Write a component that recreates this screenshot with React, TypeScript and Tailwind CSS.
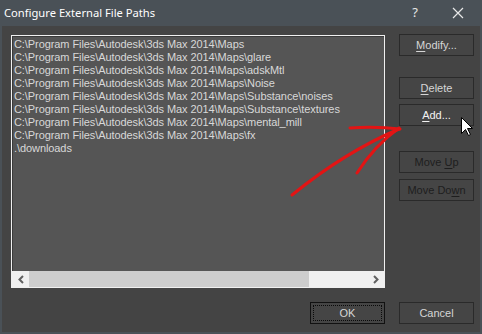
import React from "react";

const paths = [
  "C:\\Program Files\\Autodesk\\3ds Max 2014\\Maps",
  "C:\\Program Files\\Autodesk\\3ds Max 2014\\Maps\\glare",
  "C:\\Program Files\\Autodesk\\3ds Max 2014\\Maps\\adskMtl",
  "C:\\Program Files\\Autodesk\\3ds Max 2014\\Maps\\Noise",
  "C:\\Program Files\\Autodesk\\3ds Max 2014\\Maps\\Substance\\noises",
  "C:\\Program Files\\Autodesk\\3ds Max 2014\\Maps\\Substance\\textures",
  "C:\\Program Files\\Autodesk\\3ds Max 2014\\Maps\\mental_mill",
  "C:\\Program Files\\Autodesk\\3ds Max 2014\\Maps\\fx",
  ".\\downloads",
];

function Btn({
  pre,
  u,
  post,
  className = "",
  text = "text-[#d6d6d6]",
}: {
  pre: string;
  u: string;
  post: string;
  className?: string;
  text?: string;
}) {
  return (
    <div
      className={`w-[75px] h-[22px] border border-[#2a2a2a] bg-[#454545] flex items-center justify-center text-[11px] leading-none ${text} ${className}`}
    >
      <span>
        {pre}
        <span className="underline underline-offset-2">{u}</span>
        {post}
      </span>
    </div>
  );
}

export default function App() {
  return (
    <div
      className="relative w-[482px] h-[334px] bg-[#4a5157] flex flex-col overflow-hidden"
      style={{ fontFamily: '"Liberation Sans", Arial, sans-serif' }}
    >
      {/* Title bar */}
      <div className="h-[26px] flex items-center pl-[4px] pr-[14px] text-white">
        <span
          className="text-[11.2px]"
          style={{ fontFamily: '"Segoe UI", "Noto Sans", sans-serif' }}
        >
          Configure External File Paths
        </span>
        <div className="flex-1" />
        <span
          className="text-[13px] text-[#e8e8e8] mr-[34px]"
          style={{ fontFamily: '"Segoe UI", "Noto Sans", sans-serif' }}
        >
          ?
        </span>
        <svg width="12" height="12" viewBox="0 0 12 12" className="mr-[4px]">
          <path d="M1 1 L11 11 M11 1 L1 11" stroke="#e8e8e8" strokeWidth="1.2" />
        </svg>
      </div>

      {/* Body */}
      <div className="mx-[2px] mb-[2px] flex-1 bg-[#444444] flex flex-col pl-[9px] pr-[6px] pt-[8px]">
        <div className="flex">
          {/* List box */}
          <div className="mt-[1px] w-[374px] h-[253px] border border-[#f0f0f0] flex flex-col">
            <div className="flex-1 bg-[#555555] border-t border-l border-[#3a3a3a] pl-[1px] pt-[1px] text-[11px] leading-[13px] tracking-[-0.08px] text-[#d8d8d8] whitespace-pre overflow-hidden">
              {paths.map((p) => (
                <div key={p} className="h-[13px]">
                  {p}
                </div>
              ))}
            </div>
            <div className="h-[16px] bg-[#f0f0f0] flex items-stretch">
              <div className="w-[17px] flex items-center justify-center">
                <svg width="6" height="9" viewBox="0 0 6 9">
                  <path d="M5 1 L1.5 4.5 L5 8" stroke="#606060" strokeWidth="2" fill="none" />
                </svg>
              </div>
              <div className="w-[280px] bg-[#cdcdcd]" />
              <div className="flex-1" />
              <div className="w-[17px] flex items-center justify-center">
                <svg width="6" height="9" viewBox="0 0 6 9">
                  <path d="M1 1 L4.5 4.5 L1 8" stroke="#606060" strokeWidth="2" fill="none" />
                </svg>
              </div>
            </div>
          </div>

          {/* Right buttons */}
          <div className="ml-[14px] flex flex-col">
            <Btn pre="" u="M" post="odify..." />
            <Btn pre="" u="D" post="elete" className="mt-[21px]" />
            <Btn pre="" u="A" post="dd..." className="mt-[5px]" text="text-[#f2f2f2]" />
            <Btn pre="Move " u="U" post="p" className="mt-[25px]" text="text-[#1e1e1e]" />
            <Btn pre="Move Do" u="w" post="n" className="mt-[6px]" text="text-[#1e1e1e]" />
          </div>
        </div>

        {/* Bottom buttons */}
        <div className="mt-[14px] flex justify-end gap-[14px]">
          <div className="w-[75px] h-[22px] border border-[#111111] bg-[#454545] p-[2px]">
            <div className="w-full h-full border border-dotted border-[#0a0a0a] flex items-center justify-center text-[11px] text-[#d6d6d6]">
              OK
            </div>
          </div>
          <div className="w-[75px] h-[22px] border border-[#2a2a2a] bg-[#454545] flex items-center justify-center text-[11px] text-[#d6d6d6]">
            Cancel
          </div>
        </div>
      </div>

      {/* Red hand-drawn arrow overlay */}
      <svg
        className="absolute left-0 top-0 pointer-events-none"
        width="482"
        height="334"
        viewBox="0 0 482 334"
      >
        <g stroke="#e31414" strokeWidth="3" fill="none" strokeLinecap="round">
          <path d="M292 195 Q345 152 399 129" />
          <path d="M357 173 Q375 145 399 128" />
          <path d="M350 128 Q375 126 400 129" />
        </g>
        {/* Mouse cursor */}
        <path
          d="M461.5 117.5 L461.5 133.5 L465.5 129.5 L468.5 135.5 L470.5 134.5 L467.5 128.5 L472.5 128.5 Z"
          fill="#ffffff"
          stroke="#000000"
          strokeWidth="1"
        />
      </svg>
    </div>
  );
}
